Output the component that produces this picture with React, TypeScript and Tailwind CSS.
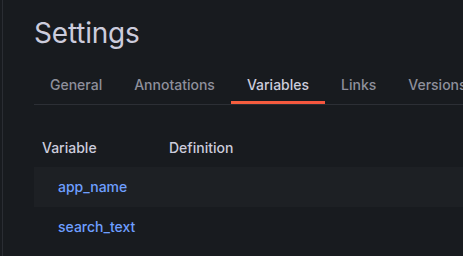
import React from "react";

const tabs = ["General", "Annotations", "Variables", "Links", "Versions"];
const variables = ["app_name", "search_text"];

const App: React.FC = () => {
  return (
    <div className="w-[463px] h-[256px] overflow-hidden bg-[#181b1f] font-['Inter',sans-serif] flex">
      {/* Left edge */}
      <div className="w-[2px] shrink-0" />
      <div className="w-px shrink-0 bg-[#2a2d33]" />
      <div className="flex-1 min-w-0 pl-[31px] pt-4">
        <h1 className="text-[28px] leading-[34px] font-normal tracking-[-0.2px] text-[#ccccdc] h-[34px]">Settings</h1>

        {/* Tabs */}
        <div className="mt-4 flex border-b border-[#2c2f35] w-[600px]">
          {tabs.map((t) => {
            const active = t === "Variables";
            return (
              <div
                key={t}
                className={`relative shrink-0 whitespace-nowrap h-[38px] flex items-center px-4 text-sm font-medium ${
                  active ? "text-[#ccccdc]" : "text-[#8e8f9b]"
                }`}
              >
                {t}
                {active && (
                  <div className="absolute left-0 right-0 bottom-0 h-[3px] bg-gradient-to-r from-[#f55f3e] to-[#f5553e]" />
                )}
              </div>
            );
          })}
        </div>

        {/* Variables table */}
        <div className="mt-6 w-[600px]">
          <div className="flex h-[38px] items-center text-sm font-medium text-[#ccccdc]">
            <div className="w-[135px] pl-2">Variable</div>
            <div>Definition</div>
          </div>
          {variables.map((v, i) => (
            <div
              key={v}
              className={`flex h-10 items-center text-sm font-medium ${i % 2 === 0 ? "bg-[#1d2024]" : ""}`}
            >
              <div className="pl-6 text-[#6e9fff]">{v}</div>
            </div>
          ))}
        </div>
      </div>
    </div>
  );
};

export default App;
